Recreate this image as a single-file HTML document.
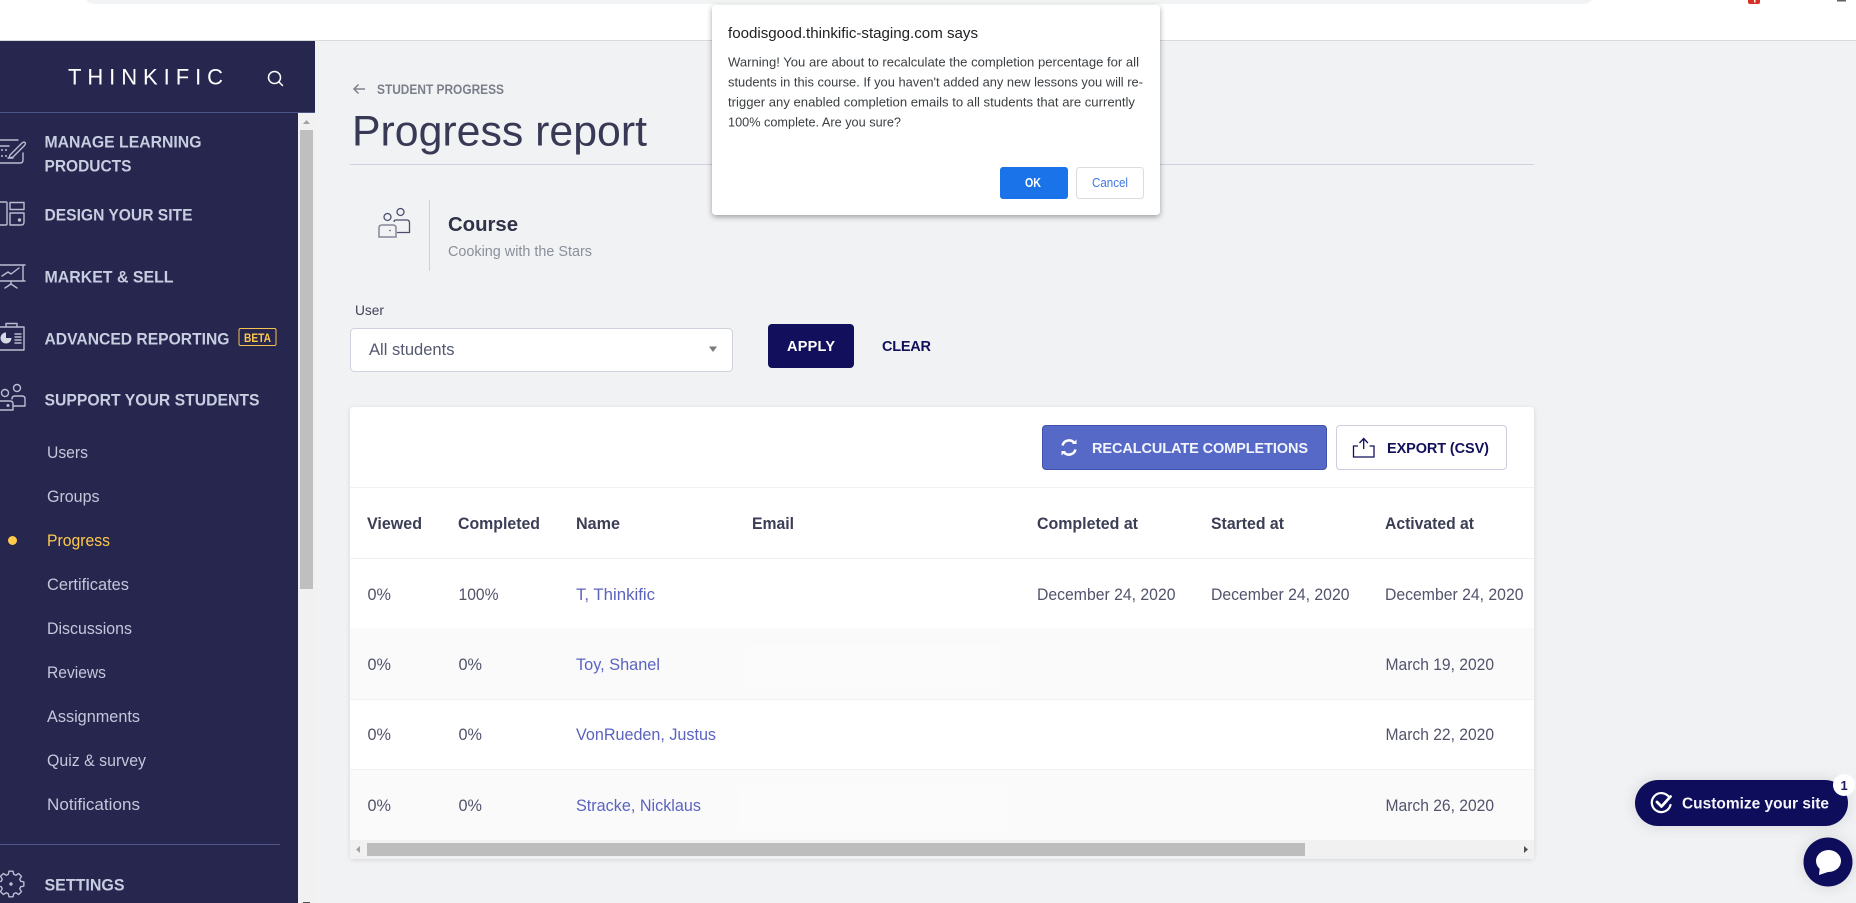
<!DOCTYPE html>
<html lang="en">
<head>
<meta charset="utf-8">
<title>Progress report</title>
<style>
html,body{margin:0;padding:0;width:1856px;height:903px;overflow:hidden;background:#f1f2f4}
svg{display:block}
text{font-family:"Liberation Sans",Arial,sans-serif;white-space:pre}
.nav{font-size:17px;font-weight:700;fill:#c8cde0}
.sub{font-size:16.5px;fill:#c3c7da}
.th{font-size:16.5px;font-weight:700;fill:#3c3e55}
.td{font-size:16.5px;fill:#51536b}
.lk{font-size:16.5px;fill:#5b63bf}
.ic{fill:none;stroke:#b9bdd0;stroke-width:1.4;stroke-linecap:round;stroke-linejoin:round}
.dl{font-size:13px;fill:#3c4043}
</style>
</head>
<body>
<svg xmlns="http://www.w3.org/2000/svg" width="1856" height="903" viewBox="0 0 1856 903">
<defs>
<filter id="dlg" x="-10%" y="-15%" width="120%" height="130%"><feDropShadow dx="0" dy="2" stdDeviation="3" flood-color="#000" flood-opacity=".35"/></filter>
<filter id="card" x="-3%" y="-3%" width="106%" height="106%"><feDropShadow dx="0" dy="1" stdDeviation="2" flood-color="#000" flood-opacity=".13"/></filter>
<filter id="pill" x="-20%" y="-50%" width="140%" height="200%"><feDropShadow dx="0" dy="0" stdDeviation="7" flood-color="#000" flood-opacity=".12"/></filter>
</defs>

<!-- browser strip -->
<rect width="1856" height="40" fill="#fff"/>
<path d="M86 0H1592Q1589 4 1583 4H95Q89 4 86 0Z" fill="#f1f3f4"/>
<path d="M1748 0h12v2q0 2-2 2h-8q-2 0-2-2z" fill="#d93025"/>
<rect x="1754" y="0" width="1.500" height="2.500" fill="#fff"/>
<rect x="1837" y="0" width="9" height="1.500" fill="#5f6368"/>
<rect y="40" width="1856" height="1" fill="#d9dadc"/>
<rect y="41" width="1856" height="862" fill="#f1f2f4"/>

<!-- sidebar -->
<rect y="41" width="315" height="862" fill="#26264e"/>
<rect y="112" width="315" height="1" fill="#4c5488"/>
<text x="68" y="84.500" font-size="22" fill="#fff" textLength="155" lengthAdjust="spacing" style="font-weight:400">THINKIFIC</text>
<g fill="none" stroke="#fff" stroke-width="1.500" stroke-linecap="round"><circle cx="274.500" cy="77.500" r="6"/><path d="M279 82l3.500 3.500"/></g>

<rect x="298" y="113" width="17" height="790" fill="#f1f1f1"/>
<rect x="300" y="130" width="13" height="459" fill="#bfbfbf"/>
<path d="M303 124l3.500-4 3.500 4z" fill="#a3a3a3"/>
<rect x="303" y="902" width="7" height="1" fill="#505050"/>

<!-- nav icons -->
<g class="ic">
<path d="M0 140H18M0 163H20Q23 163 23 160V153M0 146H9"/>
<path d="M2 150h.01M2 156h.01M6 150h.01M6 156h.01" stroke-width="2"/>
<path d="M10 155l12-12q2-1.500 3-.5t-.5 3L13 157l-4 1zM8 158h5"/>
<path d="M0 202H6Q7 202 7 203V224Q7 225 6 225H0"/>
<path d="M10 202.500H24V209.500H10ZM10 213H24V222Q24 225 21 225H10Z"/>
<circle cx="19.500" cy="220" r="1" fill="#b9bdd0"/>
<path d="M0 265H25M23 265V281M0 281H25M2 276l6-4 3 2 8-6M11 281v3M5 288l6-4 6 4"/>
<path d="M0 327H24V350H0M6 327V323.500H17V327"/>
<path d="M15 334h6M15 337h6M15 340h6M15 343h6"/>
<path d="M6 332.500a5.500 5.500 0 1 0 5.500 5.500H6Z" fill="#d4d7e4" stroke="none"/>
<circle cx="5" cy="393" r="3.500"/><circle cx="17" cy="388" r="3.500"/>
<path d="M12 399Q12 396 15 396H22Q25 396 25 399V406H13"/>
<path d="M0 401H10Q13 401 13 404V410H0"/>
<circle cx="8" cy="405.500" r=".8" fill="#b9bdd0"/>
<path d="M8.240 874.390L8.970 871.160H13.030L13.760 874.390L15.850 875.250L18.640 873.480L21.520 876.360L19.750 879.150L20.610 881.240L23.840 881.970V886.030L20.610 886.760L19.750 888.850L21.520 891.640L18.640 894.520L15.850 892.750L13.760 893.610L13.030 896.840H8.970L8.240 893.610L6.150 892.750L3.360 894.520L.48 891.640L2.250 888.850L1.390 886.760L-1.840 886.030V881.970L1.390 881.240L2.250 879.150L.48 876.360L3.360 873.480L6.150 875.250Z"/>
<circle cx="11" cy="884" r="1" fill="#b9bdd0"/>
</g>

<!-- nav text -->
<text class="nav" x="44.500" y="147.500" textLength="157" lengthAdjust="spacingAndGlyphs">MANAGE LEARNING</text>
<text class="nav" x="44.500" y="171.500" textLength="87" lengthAdjust="spacingAndGlyphs">PRODUCTS</text>
<text class="nav" x="44.500" y="220.500" textLength="148" lengthAdjust="spacingAndGlyphs">DESIGN YOUR SITE</text>
<text class="nav" x="44.500" y="282.500" textLength="129" lengthAdjust="spacingAndGlyphs">MARKET &amp; SELL</text>
<text class="nav" x="44.500" y="344.500" textLength="185" lengthAdjust="spacingAndGlyphs">ADVANCED REPORTING</text>
<rect x="239" y="328.500" width="37" height="17" rx="1.500" fill="none" stroke="#f5c14f" stroke-width="1"/>
<text x="244" y="342" font-size="11.500" font-weight="700" fill="#ffc94a" textLength="27" lengthAdjust="spacingAndGlyphs">BETA</text>
<text class="nav" x="44.500" y="405.500" textLength="215" lengthAdjust="spacingAndGlyphs">SUPPORT YOUR STUDENTS</text>

<text class="sub" x="47" y="458" textLength="41" lengthAdjust="spacingAndGlyphs">Users</text>
<text class="sub" x="47" y="502" textLength="52.500" lengthAdjust="spacingAndGlyphs">Groups</text>
<circle cx="12.500" cy="540.500" r="4.500" fill="#ffc94a"/>
<text class="sub" x="47" y="546" textLength="63" lengthAdjust="spacingAndGlyphs" style="fill:#ffc94a">Progress</text>
<text class="sub" x="47" y="590" textLength="82" lengthAdjust="spacingAndGlyphs">Certificates</text>
<text class="sub" x="47" y="634" textLength="85" lengthAdjust="spacingAndGlyphs">Discussions</text>
<text class="sub" x="47" y="678" textLength="59" lengthAdjust="spacingAndGlyphs">Reviews</text>
<text class="sub" x="47" y="722" textLength="93" lengthAdjust="spacingAndGlyphs">Assignments</text>
<text class="sub" x="47" y="766" textLength="99" lengthAdjust="spacingAndGlyphs">Quiz &amp; survey</text>
<text class="sub" x="47" y="810" textLength="93" lengthAdjust="spacingAndGlyphs">Notifications</text>
<rect y="844" width="280" height="1" fill="#4f5686"/>
<text class="nav" x="44.500" y="890.500" textLength="80" lengthAdjust="spacingAndGlyphs">SETTINGS</text>

<!-- page head -->
<path d="M365 89H354M358.500 84.500L354 89l4.500 4.500" fill="none" stroke="#7f828e" stroke-width="1.500"/>
<text x="377" y="94" font-size="13.500" font-weight="700" fill="#7b7f8b" textLength="127" lengthAdjust="spacingAndGlyphs">STUDENT PROGRESS</text>
<text x="352" y="145.500" font-size="43" fill="#383a55" textLength="295" lengthAdjust="spacingAndGlyphs">Progress report</text>
<rect x="350" y="164" width="1184" height="1" fill="#cfd1dc"/>

<!-- course -->
<g fill="none" stroke-width="1.300">
<g stroke="#4a4d6c"><circle cx="387.500" cy="217" r="3.500"/><circle cx="400.500" cy="212" r="3.500"/><path d="M394 222Q394 220 396 220H407Q409.500 220 409.500 223V232.500H397"/></g>
<path d="M379 237V228Q379 225 382 225H393Q396 225 396 228V237Z" stroke="#85889a" stroke-width="1.500"/>
<circle cx="390" cy="230.500" r=".8" fill="#4a4d6c" stroke="none"/>
</g>
<rect x="429" y="200" width="1" height="71" fill="#cdd0d6"/>
<text x="448" y="231" font-size="20" font-weight="700" fill="#30324a" textLength="70" lengthAdjust="spacingAndGlyphs">Course</text>
<text x="448" y="256" font-size="15" fill="#8b8f9b" textLength="144" lengthAdjust="spacingAndGlyphs">Cooking with the Stars</text>

<!-- filter -->
<text x="355" y="315" font-size="14" fill="#41435a" textLength="29" lengthAdjust="spacingAndGlyphs">User</text>
<rect x="350.500" y="328.500" width="382" height="43" rx="4" fill="#fff" stroke="#cfd1dc"/>
<text x="369" y="355" font-size="16.500" fill="#555870" textLength="85.500" lengthAdjust="spacingAndGlyphs">All students</text>
<path d="M709 346.500h8l-4 5.500z" fill="#7a7a7a"/>
<rect x="768" y="324" width="86" height="44" rx="4" fill="#12105c"/>
<text x="787" y="351" font-size="14.500" font-weight="700" fill="#fff" textLength="48" lengthAdjust="spacing">APPLY</text>
<text x="882" y="351" font-size="14.500" font-weight="700" fill="#12105c" textLength="49" lengthAdjust="spacing">CLEAR</text>

<!-- card -->
<rect x="350" y="407" width="1184" height="452" rx="4" fill="#fff" filter="url(#card)"/>
<rect x="1042.500" y="425.500" width="284" height="44" rx="3.500" fill="#5669c7" stroke="#4150ab"/>
<g fill="none" stroke="#fff" stroke-width="2.500">
<path d="M1062.500 445.500a6.800 6.800 0 0 1 11.500-3"/><path d="M1075.500 449.500a6.800 6.800 0 0 1-11.500 3"/>
</g>
<path d="M1072 444l4.500 0v-4.500zM1066 451h-4.500v4.500z" fill="#fff"/>
<text x="1092" y="453" font-size="14.500" font-weight="700" fill="#f3f5fd" textLength="216" lengthAdjust="spacing">RECALCULATE COMPLETIONS</text>
<rect x="1336.500" y="425.500" width="170" height="44" rx="3.500" fill="#fff" stroke="#cfcde0"/>
<path d="M1358 446H1353.500V457H1374V446H1369.500M1363.700 449V439M1359.500 443l4.200-4.500 4.200 4.500" fill="none" stroke="#12105c" stroke-width="1.300"/>
<text x="1387" y="453" font-size="14.500" font-weight="700" fill="#12105c" textLength="102" lengthAdjust="spacing">EXPORT (CSV)</text>

<rect x="350" y="487" width="1184" height="1" fill="#f1f1f3"/>
<rect x="350" y="558" width="1184" height="1" fill="#f1f1f3"/>
<rect x="350" y="628" width="1184" height="71" fill="#fafafb"/>
<rect x="745" y="645" width="255" height="45" fill="#fbfbfc"/>
<rect x="350" y="699" width="1184" height="1" fill="#f1f1f3"/>
<rect x="350" y="769" width="1184" height="71" fill="#fafafb"/>
<rect x="350" y="769" width="1184" height="1" fill="#f1f1f3"/>
<rect x="738" y="785" width="270" height="45" fill="#fbfbfc"/>

<text class="th" x="367" y="529" textLength="55" lengthAdjust="spacingAndGlyphs">Viewed</text>
<text class="th" x="458" y="529" textLength="82" lengthAdjust="spacingAndGlyphs">Completed</text>
<text class="th" x="576" y="529" textLength="44" lengthAdjust="spacingAndGlyphs">Name</text>
<text class="th" x="752" y="529" textLength="42" lengthAdjust="spacingAndGlyphs">Email</text>
<text class="th" x="1037" y="529" textLength="101" lengthAdjust="spacingAndGlyphs">Completed at</text>
<text class="th" x="1211" y="529" textLength="73" lengthAdjust="spacingAndGlyphs">Started at</text>
<text class="th" x="1385" y="529" textLength="89" lengthAdjust="spacingAndGlyphs">Activated at</text>

<text class="td" x="367.500" y="600" textLength="23.500" lengthAdjust="spacingAndGlyphs">0%</text>
<text class="td" x="458.500" y="600" textLength="40" lengthAdjust="spacingAndGlyphs">100%</text>
<text class="lk" x="576" y="600" textLength="79" lengthAdjust="spacingAndGlyphs">T, Thinkific</text>
<text class="td" x="1037" y="600" textLength="138.500" lengthAdjust="spacingAndGlyphs">December 24, 2020</text>
<text class="td" x="1211" y="600" textLength="138.500" lengthAdjust="spacingAndGlyphs">December 24, 2020</text>
<text class="td" x="1385" y="600" textLength="138.500" lengthAdjust="spacingAndGlyphs">December 24, 2020</text>

<text class="td" x="367.500" y="670" textLength="23.500" lengthAdjust="spacingAndGlyphs">0%</text>
<text class="td" x="458.500" y="670" textLength="23.500" lengthAdjust="spacingAndGlyphs">0%</text>
<text class="lk" x="576" y="670" textLength="84" lengthAdjust="spacingAndGlyphs">Toy, Shanel</text>
<text class="td" x="1385.500" y="670" textLength="108.500" lengthAdjust="spacingAndGlyphs">March 19, 2020</text>

<text class="td" x="367.500" y="740" textLength="23.500" lengthAdjust="spacingAndGlyphs">0%</text>
<text class="td" x="458.500" y="740" textLength="23.500" lengthAdjust="spacingAndGlyphs">0%</text>
<text class="lk" x="576" y="740" textLength="140" lengthAdjust="spacingAndGlyphs">VonRueden, Justus</text>
<text class="td" x="1385.500" y="740" textLength="108.500" lengthAdjust="spacingAndGlyphs">March 22, 2020</text>

<text class="td" x="367.500" y="811" textLength="23.500" lengthAdjust="spacingAndGlyphs">0%</text>
<text class="td" x="458.500" y="811" textLength="23.500" lengthAdjust="spacingAndGlyphs">0%</text>
<text class="lk" x="576" y="811" textLength="125" lengthAdjust="spacingAndGlyphs">Stracke, Nicklaus</text>
<text class="td" x="1385.500" y="811" textLength="108.500" lengthAdjust="spacingAndGlyphs">March 26, 2020</text>

<!-- table scrollbar -->
<rect x="350" y="840" width="1184" height="19" fill="#f1f1f1"/>
<rect x="367" y="843" width="938" height="13" fill="#bdbdbd"/>
<path d="M360 846v7l-4-3.500z" fill="#a3a3a3"/>
<path d="M1524 846v7l4-3.500z" fill="#505050"/>

<!-- dialog -->
<rect x="712" y="5" width="448" height="210" rx="4" fill="#fff" filter="url(#dlg)"/>
<text x="728" y="38" font-size="15" fill="#202124" textLength="250" lengthAdjust="spacingAndGlyphs">foodisgood.thinkific-staging.com says</text>
<text class="dl" x="728" y="66.500" textLength="411" lengthAdjust="spacingAndGlyphs">Warning! You are about to recalculate the completion percentage for all</text>
<text class="dl" x="728" y="86.500" textLength="415" lengthAdjust="spacingAndGlyphs">students in this course. If you haven't added any new lessons you will re-</text>
<text class="dl" x="728" y="106.500" textLength="407" lengthAdjust="spacingAndGlyphs">trigger any enabled completion emails to all students that are currently</text>
<text class="dl" x="728" y="126.500" textLength="173" lengthAdjust="spacingAndGlyphs">100% complete. Are you sure?</text>
<rect x="1000" y="167" width="68" height="32" rx="3" fill="#1a73e8"/>
<text x="1025" y="187" font-size="13" font-weight="700" fill="#fff" textLength="16" lengthAdjust="spacingAndGlyphs">OK</text>
<rect x="1076.500" y="167.500" width="67" height="31" rx="3" fill="#fff" stroke="#dadce0"/>
<text x="1092" y="187" font-size="13" fill="#3f76e0" textLength="36" lengthAdjust="spacingAndGlyphs">Cancel</text>

<!-- widgets -->
<rect x="1635" y="780" width="213" height="46" rx="23" fill="#110c5c" filter="url(#pill)"/>
<g fill="none" stroke="#fff" stroke-width="2.200" stroke-linecap="round" stroke-linejoin="round">
<path d="M1669 797a9.500 9.500 0 1 0 1.500 8"/>
<path d="M1657 802l4.500 4.500 9-10" stroke-width="2.800"/>
</g>
<text x="1682" y="808.500" font-size="15.500" font-weight="700" fill="#f5f5fb" textLength="147" lengthAdjust="spacingAndGlyphs">Customize your site</text>
<circle cx="1844" cy="785" r="11" fill="#fff"/>
<text x="1840.500" y="790" font-size="13" font-weight="700" fill="#1d1a66">1</text>
<circle cx="1828" cy="862" r="24.500" fill="#110c5c" filter="url(#pill)"/>
<ellipse cx="1828.500" cy="861" rx="12.500" ry="11" fill="#fff"/>
<path d="M1820 866l-1 9 9-3z" fill="#fff"/>
</svg>
</body>
</html>
